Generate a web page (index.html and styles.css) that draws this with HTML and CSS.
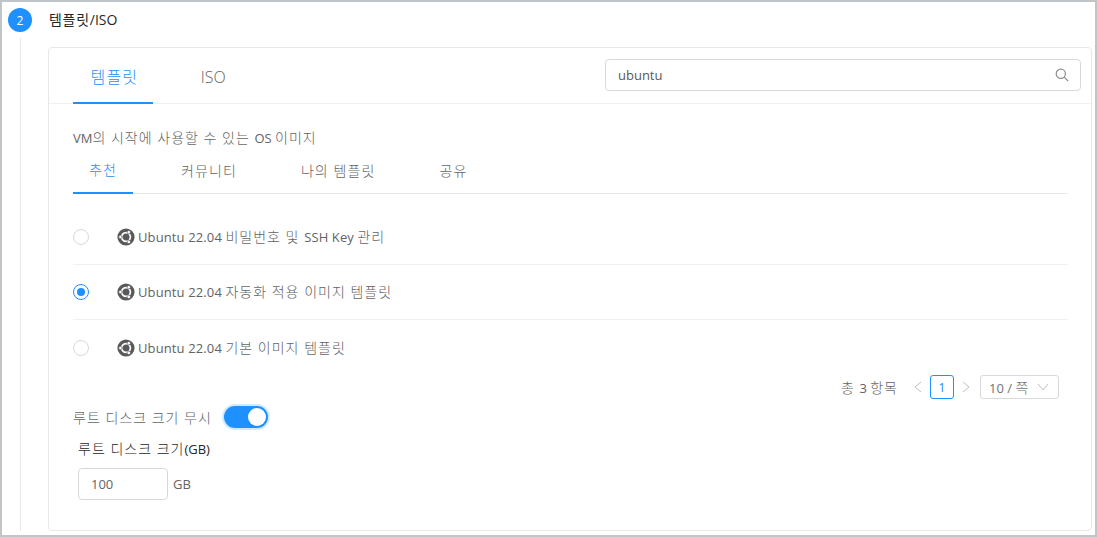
FILE: index.html
```html
<!DOCTYPE html>
<html lang="ko">
<head>
<meta charset="utf-8">
<title>템플릿/ISO</title>
<link rel="stylesheet" href="styles.css">
</head>
<body>
<svg class="defs" width="0" height="0" aria-hidden="true">
  <symbol id="ubuntu" viewBox="0 0 18 18">
    <circle cx="9" cy="9" r="8.6" fill="#595959"/>
    <circle cx="9" cy="9" r="4.4" fill="none" stroke="#fff" stroke-width="1.7"/>
    <circle cx="3.4" cy="9" r="1.7" fill="#fff" stroke="#595959" stroke-width=".6"/>
    <circle cx="11.8" cy="4.1" r="1.7" fill="#fff" stroke="#595959" stroke-width=".6"/>
    <circle cx="11.8" cy="13.9" r="1.7" fill="#fff" stroke="#595959" stroke-width=".6"/>
  </symbol>
</svg>
<main class="frame">
  <header class="step-head">
    <span class="step-num">2</span>
    <span class="step-title"><span class="ko">템플릿</span>/ISO</span>
  </header>
  <div class="step-body">
    <div class="rail"><i></i></div>
    <section class="card">
      <div class="card-top">
        <nav class="tabs">
          <a class="tab active"><span class="ko">템플릿</span></a>
          <a class="tab">ISO</a>
        </nav>
        <div class="search">
          <span>ubuntu</span>
          <svg width="14" height="14" viewBox="0 0 14 14" fill="none" stroke="#8c8c8c" stroke-width="1.2"><circle cx="5.8" cy="5.8" r="4.6"/><path d="M9.2 9.2l4 4"/></svg>
        </div>
      </div>
      <div class="card-body">
        <p class="desc">VM<span class="ko">의 시작에 사용할 수 있는 </span>OS <span class="ko">이미지</span></p>
        <nav class="subtabs">
          <a class="subtab active"><span class="ko">추천</span></a>
          <a class="subtab"><span class="ko">커뮤니티</span></a>
          <a class="subtab"><span class="ko">나의 템플릿</span></a>
          <a class="subtab"><span class="ko">공유</span></a>
        </nav>
        <ul class="list">
          <li class="row"><span class="radio"></span><svg class="os" width="18" height="18"><use href="#ubuntu"/></svg><span class="row-text">Ubuntu 22.04 <span class="ko">비밀번호 및 </span>SSH Key <span class="ko">관리</span></span></li>
          <li class="row"><span class="radio checked"></span><svg class="os" width="18" height="18"><use href="#ubuntu"/></svg><span class="row-text">Ubuntu 22.04 <span class="ko">자동화 적용 이미지 템플릿</span></span></li>
          <li class="row"><span class="radio"></span><svg class="os" width="18" height="18"><use href="#ubuntu"/></svg><span class="row-text">Ubuntu 22.04 <span class="ko">기본 이미지 템플릿</span></span></li>
        </ul>
        <div class="pager">
          <span class="total"><span class="ko">총 </span>3 <span class="ko">항목</span></span>
          <svg class="chev" width="10" height="12" viewBox="0 0 10 12" fill="none" stroke="#bfbfbf"><path d="M8 1L2 6l6 5"/></svg>
          <span class="page">1</span>
          <svg class="chev" width="10" height="12" viewBox="0 0 10 12" fill="none" stroke="#bfbfbf"><path d="M2 1l6 5-6 5"/></svg>
          <span class="size"><span>10 / <span class="ko">쪽</span></span><svg width="12" height="8" viewBox="0 0 12 8" fill="none" stroke="#bfbfbf"><path d="M1 1l5 6 5-6"/></svg></span>
        </div>
        <div class="switch-row">
          <span class="ko">루트 디스크 크기 무시</span>
          <span class="switch"><i></i></span>
        </div>
        <div class="disk">
          <label class="disk-label"><span class="ko">루트 디스크 크기</span>(GB)</label>
          <div class="disk-input">
            <span class="input">100</span>
            <span>GB</span>
          </div>
        </div>
      </div>
    </section>
  </div>
</main>
</body>
</html>
```
FILE: styles.css
```css
* { box-sizing: border-box; }
html, body { margin: 0; padding: 0; }
body { width: 1097px; height: 537px; overflow: hidden; background: #fff; font-family: "Open Sans", "Noto Sans CJK KR", sans-serif; font-size: 13px; font-weight: 400; color: #636363; }
.defs { display: block; height: 0; }
.ko { font-size: 14px; letter-spacing: 1px; font-weight: 300; }
.frame { width: 1097px; height: 537px; border: 2px solid #c1c5c7; padding: 6px 3px 4px 6px; display: flex; flex-direction: column; }
.step-head { display: flex; align-items: center; height: 24px; flex: none; }
.step-num { width: 24px; height: 24px; border-radius: 50%; background: #1e90ff; color: #fff; font-size: 12px; display: flex; align-items: center; justify-content: center; }
.step-title { margin-left: 17px; font-size: 14px; line-height: 22px; margin-top: -1px; color: #262626; }
.step-title .ko { font-weight: 400; letter-spacing: .7px; }
.step-body { display: flex; flex: 1; min-height: 0; }
.rail { width: 40px; flex: none; padding: 6px 0 0 12px; }
.rail i { display: block; width: 1px; height: 100%; background: #e8e8e8; }
.card { flex: 1; margin-top: 15px; border: 1px solid #e8e8e8; border-radius: 4px; display: flex; flex-direction: column; }
.card-top { display: flex; justify-content: space-between; align-items: flex-start; height: 56px; border-bottom: 1px solid #f0f0f0; padding: 11px 10px 0 24px; flex: none; }
.tabs { display: flex; margin-top: -11px; }
.tab { padding: 2px 16px 0; margin-right: 32px; height: 56px; display: flex; align-items: center; justify-content: center; font-size: 16px; font-weight: 300; }
.tab .ko { font-size: 16px; letter-spacing: 1.2px; padding-left: 1.5px; margin-right: -1.5px; }
.tab.active { color: #1e90ff; border-bottom: 2px solid #1e90ff; }
.search { width: 476px; height: 32px; border: 1px solid #d9d9d9; border-radius: 4px; display: flex; align-items: center; justify-content: space-between; padding: 0 11px 0 12px; color: #595959; }
.card-body { padding: 0 23px 0 24px; flex: 1; }
.desc { margin: 24px 0 0; height: 20px; line-height: 20px; }
.subtabs { display: flex; height: 41px; margin-top: 5px; border-bottom: 1px solid #e8e8e8; }
.subtab { padding: 0 16px 7px; margin-right: 32px; height: 41px; display: flex; align-items: center; justify-content: center; }
.subtab .ko { letter-spacing: 1.1px; }
.subtab.active { color: #1e90ff; border-bottom: 2px solid #1e90ff; }
.list { list-style: none; margin: 16px 0 0; padding: 0; }
.row { height: 55px; display: flex; align-items: center; border-bottom: 1px solid #f0f0f0; }
.row:last-child { border-bottom: 0; }
.row-text { padding-bottom: 2px; letter-spacing: .12px; }
.radio { width: 16px; height: 16px; border-radius: 50%; border: 1px solid #d9d9d9; margin-right: 28px; position: relative; flex: none; }
.radio.checked { border-color: #1e90ff; }
.radio.checked::after { content: ""; position: absolute; left: 3px; top: 3px; width: 8px; height: 8px; border-radius: 50%; background: #1e90ff; }
.os { margin-right: 3px; flex: none; }
.pager { display: flex; align-items: center; justify-content: flex-end; height: 24px; padding-right: 9px; }
.total { margin-right: 15px; }
.page { width: 24px; height: 24px; border: 1px solid #1e90ff; border-radius: 3px; color: #1e90ff; display: flex; align-items: center; justify-content: center; margin: 0 7px; }
.size { width: 79px; height: 24px; border: 1px solid #d9d9d9; border-radius: 3px; display: flex; align-items: center; justify-content: space-between; padding: 0 9px 0 8px; margin-left: 9px; color: #737373; }
.switch-row { display: flex; align-items: center; gap: 12px; height: 22px; margin-top: 7px; }
.switch { width: 44px; height: 22px; border-radius: 11px; background: #1e90ff; position: relative; box-shadow: 0 0 0 2px #d2e9ff; }
.switch i { position: absolute; right: 2px; top: 2px; width: 18px; height: 18px; border-radius: 50%; background: #fff; }
.disk { padding-left: 5px; }
.disk-label { display: block; color: #262626; margin-top: 11px; height: 20px; line-height: 20px; }
.disk-input { display: flex; align-items: center; gap: 5px; margin-top: 9px; }
.input { width: 90px; height: 32px; border: 1px solid #d9d9d9; border-radius: 4px; display: flex; align-items: center; padding-left: 12px; }
```
